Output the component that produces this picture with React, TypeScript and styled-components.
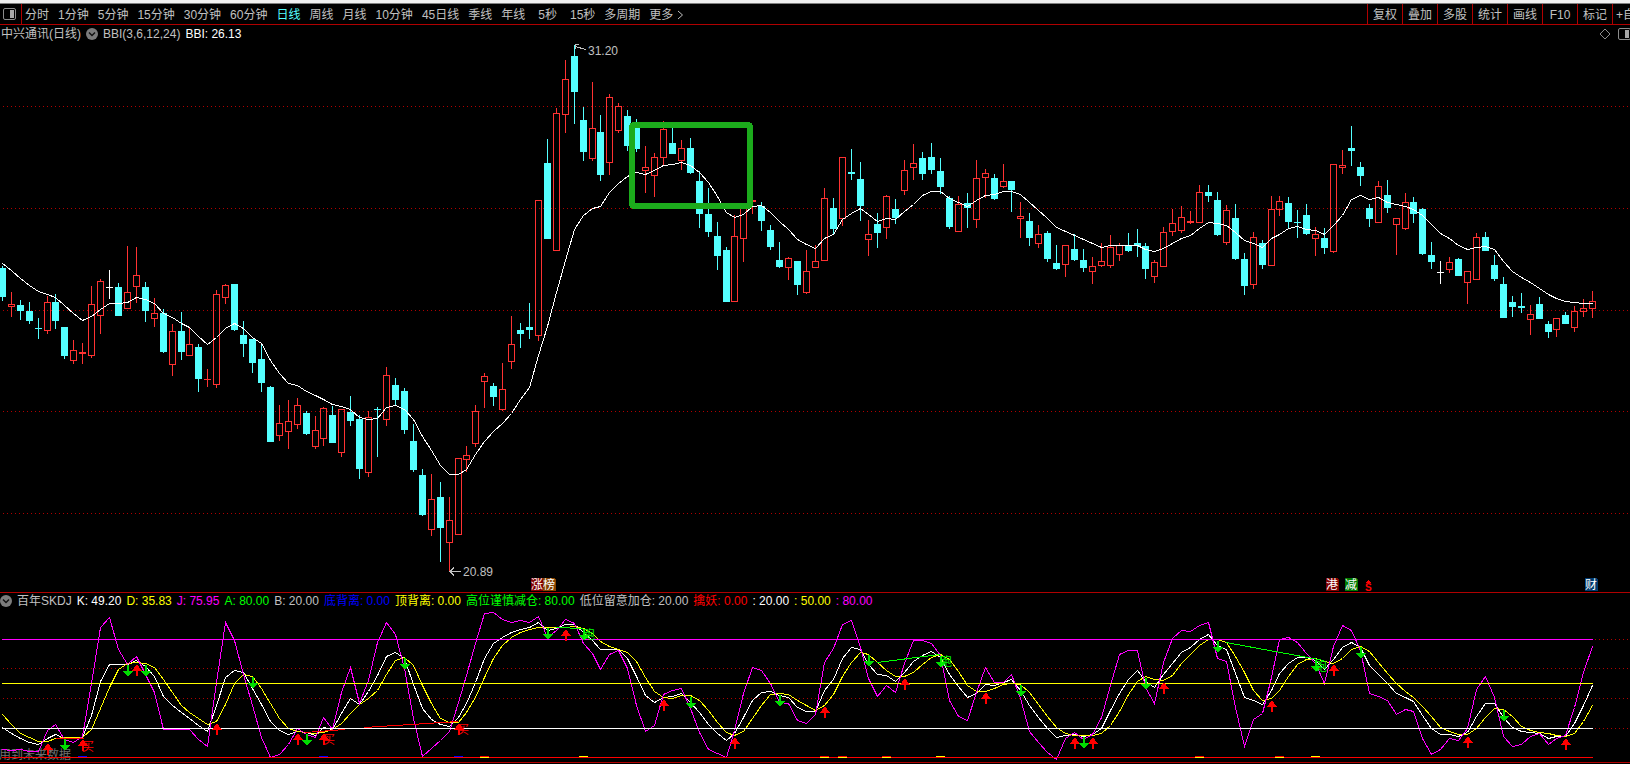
import React from "react";
import styled, { createGlobalStyle } from "styled-components";

const FONT = '"Liberation Sans", "Noto Sans CJK SC", sans-serif';
const LINE = "#b00000";
const CYAN = "#54ffff";
const RED = "#ff3232";
const SILVER = "#c0c0c0";
const MAGENTA = "#ff00ff";

const GlobalStyle = createGlobalStyle`
  * { box-sizing: border-box; }
  body { margin: 0; background: #000; overflow-x: hidden; }
`;

const Page = styled.main`
  display: flex;
  flex-direction: column;
  background: #000;
  color: ${SILVER};
  font: 12px/16px ${FONT};
`;

const TopEdge = styled.div`
  height: 4px;
  background: #f0f0f0;
  border-bottom: 1px solid #808080;
`;

const Toolbar = styled.header`
  display: flex;
  justify-content: space-between;
  height: 21px;
  border-bottom: 1px solid ${LINE};
`;

const Group = styled.nav`
  display: flex;
  align-items: stretch;
  flex: none;
`;

const PlainButton = styled.button`
  padding: 0;
  border: 0;
  background: none;
  color: inherit;
  font: inherit;
  white-space: nowrap;
  cursor: pointer;
`;

const IconButton = styled(PlainButton)`
  display: flex;
  align-items: center;
  flex: none;
`;

const LayoutButton = styled(IconButton)`
  width: 22px;
  padding-left: 3px;
  border-right: 1px solid ${LINE};
`;

const Periods = styled.div`
  display: flex;
  gap: 9px;
  padding: 2px 0 0 3px;
`;

const Period = styled(PlainButton)<{ $active?: boolean; $spaced?: boolean }>`
  padding-left: ${(p) => (p.$spaced ? 4 : 0)}px;
  color: ${(p) => (p.$active ? CYAN : SILVER)};
`;

const MoreButton = styled(PlainButton)`
  display: flex;
  align-items: center;
  gap: 4px;
`;

const Tool = styled(PlainButton)<{ $clipped?: boolean }>`
  width: ${(p) => (p.$clipped ? 18 : 35)}px;
  padding: 2px 0 0 ${(p) => (p.$clipped ? 3 : 0)}px;
  border-left: 1px solid ${LINE};
  text-align: ${(p) => (p.$clipped ? "left" : "center")};
  overflow: hidden;
`;

const Panel = styled.section`
  border-bottom: 1px solid ${LINE};
`;

const TitleRow = styled.div`
  display: flex;
  align-items: center;
  justify-content: space-between;
  height: 18px;
  padding-left: 1px;
  overflow: hidden;
`;

const LegendRow = styled.div`
  display: flex;
  align-items: center;
  gap: 5px;
  height: 17px;
  padding-bottom: 2px;
  white-space: nowrap;
`;

const Fields = styled.div`
  display: flex;
  align-items: center;
  gap: 5px;
  white-space: nowrap;
`;

const Corner = styled.div`
  display: flex;
  gap: 7px;
  width: 31px;
  overflow: hidden;
`;

const Field = styled.span<{ $color?: string }>`
  color: ${(p) => p.$color ?? SILVER};
`;

const Plot = styled.svg`
  display: block;
  width: 100%;
  height: auto;
  font: 12px ${FONT};
  shape-rendering: crispEdges;
`;

/* ---------- data ---------- */

type Kind = "R" | "C" | "W";
type Candle = [Kind, number, number, number, number];

// kind, wick top, body top, body bottom, wick bottom
const candles: Candle[] = [
  ["C",266,268,297,301],["R",292,304,307,317],["C",300,305,311,320],["C",302,311,321,324],["C",318,328,329,339],
  ["R",296,302,331,334],["C",294,302,321,329],["C",327,327,356,359],["R",340,350,361,364],["R",343,352,354,364],
  ["R",286,304,356,358],["R",279,281,316,334],["W",270,287,288,299],["C",283,287,316,316],["R",246,292,309,309],
  ["R",247,275,287,303],["C",282,287,311,322],["R",298,313,319,327],["C",309,313,352,353],["R",324,331,365,376],
  ["C",312,331,352,360],["R",328,344,356,356],["C",344,347,379,392],["R",369,379,380,387],["R",290,294,385,388],
  ["R",284,285,298,304],["C",284,284,330,331],["C",321,335,344,357],["C",339,339,363,373],["C",343,359,383,392],
  ["C",386,387,442,442],["R",405,423,436,441],["R",400,421,432,449],["R",398,405,425,429],["C",411,413,434,435],
  ["R",416,430,447,449],["R",407,408,439,446],["C",406,415,443,443],["R",409,409,453,457],["C",396,412,421,426],
  ["C",415,419,469,479],["R",411,417,473,477],["C",407,409,410,457],["R",367,375,420,426],["C",378,385,400,406],
  ["C",388,391,430,434],["C",424,441,470,472],["C",469,475,515,516],["R",474,499,530,536],["C",482,497,528,562],
  ["R",497,520,543,571],["R",458,458,535,535],["R",446,455,460,472],["R",405,411,444,447],["R",373,376,382,408],
  ["C",383,386,397,406],["R",363,389,410,411],["R",316,344,362,369],["C",323,330,334,348],["C",303,327,330,339],
  ["R",200,200,336,341],["C",139,163,239,239],["R",108,113,251,251],["R",60,79,115,133],["C",45,56,92,124],
  ["C",107,120,152,161],["R",82,128,159,161],["C",115,132,175,181],["R",94,97,163,175],["R",103,106,131,133],
  ["C",110,116,146,151],["C",119,125,149,152],["R",146,167,171,193],["R",153,157,176,197],["R",121,129,158,165],
  ["C",126,143,154,154],["R",140,148,161,170],["C",138,148,173,174],["C",171,181,214,228],["C",188,214,232,237],
  ["C",222,236,256,270],["C",247,250,302,302],["R",215,236,302,302],["R",206,206,239,262],["R",200,200,202,214],
  ["C",202,206,221,231],["C",225,230,247,250],["C",242,260,267,268],["R",257,258,268,280],["C",261,261,285,295],
  ["R",250,271,293,294],["R",245,261,268,268],["R",188,198,261,261],["C",198,208,229,234],["R",157,157,219,226],
  ["C",149,172,174,180],["C",162,179,206,221],["R",220,234,240,256],["C",213,224,233,248],["R",195,196,228,239],
  ["C",199,209,218,224],["R",160,170,191,195],["R",144,163,168,180],["C",152,158,174,180],["C",143,157,170,174],
  ["C",158,171,187,194],["C",196,198,227,229],["R",196,204,232,232],["C",193,203,208,228],["R",160,178,220,228],
  ["R",169,173,178,198],["C",174,178,199,200],["R",164,181,187,188],["C",181,181,190,212],["R",202,216,219,238],
  ["C",213,221,238,246],["R",225,234,244,248],["C",231,233,259,262],["C",245,263,269,270],["R",245,245,265,277],
  ["C",234,249,260,261],["C",249,260,268,272],["R",257,266,272,284],["R",243,261,266,267],["R",235,247,266,268],
  ["R",243,245,255,261],["C",233,245,251,252],["C",229,243,246,257],["C",243,246,269,279],["R",260,262,277,283],
  ["R",227,232,267,267],["R",209,223,232,236],["R",206,217,231,233],["R",211,221,223,224],["R",185,192,223,223],
  ["C",185,192,196,202],["C",192,200,235,236],["R",205,210,243,245],["C",204,218,259,260],["C",253,259,286,295],
  ["R",232,237,285,289],["C",240,243,265,269],["R",196,209,266,266],["R",196,201,210,216],["C",197,203,222,229],
  ["C",210,222,223,238],["C",204,215,234,235],["R",227,234,239,256],["C",228,238,248,254],["R",164,164,252,253],
  ["R",150,165,168,174],["C",126,148,151,166],["C",162,167,176,186],["C",204,208,219,227],["R",181,186,223,223],
  ["C",180,195,208,213],["R",218,218,225,255],["R",193,202,229,230],["C",197,202,214,223],["C",208,209,254,255],
  ["C",242,255,262,269],["W",261,272,273,284],["R",257,262,270,273],["C",258,259,276,276],["R",271,271,283,304],
  ["R",233,237,280,280],["C",232,237,251,251],["C",255,265,279,281],["C",277,284,318,318],["C",296,302,307,317],
  ["C",293,306,308,313],["R",305,314,320,335],["C",297,304,319,319],["C",321,324,332,338],["R",318,318,330,337],
  ["C",312,315,324,324],["R",306,311,328,332],["R",299,308,312,317],["R",291,301,309,318],
];

const bbi = [
  263,270,278,285,291,294,297,305,313,320,316,309,303,303,302,297,299,303,313,317,323,327,336,344,337,328,323,328,337,343,
  360,373,383,385,391,395,399,404,406,409,417,419,418,407,405,409,419,436,450,465,474,474,469,454,441,431,423,413,399,387,
  355,326,292,260,229,215,208,206,192,183,176,172,174,170,165,164,162,165,172,182,196,212,217,214,206,205,212,221,229,239,
  244,248,238,234,219,213,208,214,221,218,219,211,204,195,191,191,198,202,206,200,195,194,191,191,194,202,210,218,227,231,
  235,239,243,247,245,245,245,245,249,251,248,243,238,235,228,222,223,225,232,240,243,247,238,234,228,226,229,230,234,225,
  215,199,195,199,197,202,204,206,209,215,224,233,238,245,249,247,246,249,261,271,277,282,288,294,298,301,302,303,303,
];

const kLine = [
  727,733,738,742,744,738,734,738,738,737,715,681,664,664,664,660,666,676,696,705,712,718,725,731,705,677,670,672,688,704,
  721,730,734,731,732,735,727,729,713,698,704,691,675,656,652,658,684,708,719,724,726,717,703,682,658,643,637,632,629,627,
  622,630,628,624,624,632,640,649,649,649,658,676,695,702,697,696,693,702,712,724,733,740,733,717,700,692,691,695,697,707,
  711,711,690,679,658,647,649,664,674,675,681,672,661,655,651,657,674,686,697,693,684,685,682,679,690,705,717,728,737,735,
  734,736,734,728,710,693,679,670,681,687,674,663,652,647,639,634,645,649,673,697,700,704,690,673,663,657,657,660,669,659,
  647,642,647,665,674,683,693,697,701,715,728,734,734,736,732,716,703,703,717,727,731,732,733,738,736,736,723,705,685,
];

const dLine = [
  714,724,733,737,741,741,738,737,737,737,729,708,687,669,663,662,663,667,679,692,705,712,718,724,721,704,683,674,676,688,
  703,718,728,731,732,733,732,729,723,713,704,698,690,674,660,657,665,685,703,718,722,722,712,697,677,658,645,637,632,629,
  627,627,627,627,626,628,633,641,646,649,652,661,677,691,697,698,695,695,700,710,722,732,735,731,718,705,694,693,694,700,
  705,710,705,694,676,662,652,654,662,670,676,676,672,664,657,654,659,671,685,691,691,688,684,683,684,692,704,716,727,733,
  735,735,735,733,725,711,694,681,676,679,680,675,663,654,645,639,639,642,656,672,690,700,698,690,676,664,659,658,661,663,
  658,649,646,651,662,673,683,691,697,706,716,727,731,734,734,728,717,708,709,716,726,730,732,733,735,736,733,721,705,
];

const jLine = [
  749,750,749,751,751,730,724,739,742,736,683,627,617,649,664,656,674,692,729,729,729,729,739,746,682,622,640,674,705,737,
  757,754,744,728,734,737,717,729,692,667,703,680,642,622,634,668,718,756,748,740,731,702,675,643,613,612,619,622,620,622,
  616,637,630,619,623,643,653,669,654,650,668,705,731,725,694,690,688,708,732,749,753,757,730,693,667,670,683,702,703,720,
  723,714,662,648,624,620,647,678,696,685,692,663,640,640,643,655,700,716,720,692,667,682,682,674,698,731,742,752,759,738,
  732,739,734,717,685,654,650,650,687,703,662,638,630,631,625,622,658,661,707,746,719,713,677,639,637,642,653,663,683,646,
  625,630,650,693,696,700,714,709,711,738,754,749,738,740,728,689,676,697,736,746,744,736,733,744,738,735,707,672,646,
];

// bar index, top of the arrow
const upArrows: [number, number][] = [
  [5,743],[9,739],[15,664],[24,723],[33,733],[36,733],[51,723],[63,629],[74,699],[82,737],[92,706],
  [101,678],[110,692],[120,737],[122,737],[130,682],[142,700],[149,664],[164,736],[175,738],
];
const downArrows: [number, number][] = [
  [7,739],[14,665],[16,665],[28,677],[34,734],[45,658],[61,628],[65,629],[77,697],[87,695],[97,655],
  [105,656],[114,685],[121,737],[128,678],[136,641],[147,660],[152,647],[168,710],
];

const badges = [
  { x: 531, text: "涨", fill: "#800000" },
  { x: 543, text: "榜", fill: "#844200" },
  { x: 1326, text: "港", fill: "#800000" },
  { x: 1345, text: "减", fill: "#007a00" },
  { x: 1585, text: "财", fill: "#003a70" },
];

const legend: [string, string?][] = [
  ["百年SKDJ"],
  ["K: 49.20", "#fff"],
  ["D: 35.83", "#ffff00"],
  ["J: 75.95", MAGENTA],
  ["A: 80.00", "#00ff00"],
  ["B: 20.00"],
  ["底背离: 0.00", "#0000ff"],
  ["顶背离: 0.00", "#ffff00"],
  ["高位谨慎减仓: 80.00", "#00ff00"],
  ["低位留意加仓: 20.00"],
  ["擒妖: 0.00", "#ff0000"],
  [": 20.00", "#fff"],
  [": 50.00", "#ffff00"],
  [": 80.00", MAGENTA],
];

const periods = [
  "分时", "1分钟", "5分钟", "15分钟", "30分钟", "60分钟", "日线", "周线", "月线",
  "10分钟", "45日线", "季线", "年线", "5秒", "15秒", "多周期",
];
const tools = ["复权", "叠加", "多股", "统计", "画线", "F10", "标记"];

/* ---------- drawing helpers ---------- */

// Bars are just under nine pixels apart, so one pixel is dropped now and then.
const barX = (i: number) => 2 + 9 * i - (Math.floor((i - 5.45) / 15.25) + 1);
const points = (ys: number[]) => ys.map((y, i) => `${barX(i) + 0.5},${y + 0.5}`).join(" ");

const Curve = ({ ys, color }: { ys: number[]; color: string }) => (
  <polyline points={points(ys)} fill="none" stroke={color} />
);

const Dots = ({ y, from = 3 }: { y: number; from?: number }) => (
  <line x1={from} x2={1628} y1={y + 0.5} y2={y + 0.5} stroke={LINE} strokeDasharray="1 3" />
);

const Level = ({ y, color }: { y: number; color: string }) => (
  <rect x={2} y={y} width={1591} height={1} fill={color} />
);

const CandleMark = ({ x, data }: { x: number; data: Candle }) => {
  const [kind, high, top, bottom, low] = data;
  const color = kind === "C" ? CYAN : kind === "R" ? RED : "#fff";
  const height = bottom - top;
  const hollow = kind === "R" && height > 2;
  return (
    <g fill={color}>
      {top > high && <rect x={x} y={high} width={1} height={top - high} />}
      {low > bottom && <rect x={x} y={bottom} width={1} height={low - bottom} />}
      {hollow ? (
        <rect x={x - 2.5} y={top + 0.5} width={6} height={height - 1} fill="none" stroke={color} />
      ) : (
        <rect x={x - 3} y={top} width={7} height={height} />
      )}
    </g>
  );
};

const UpArrow = ({ x, y }: { x: number; y: number }) => (
  <path d={`M${x + 1} ${y}l5 7h-4v5h-2v-5h-4z`} fill="#ff0000" />
);
const DownArrow = ({ x, y }: { x: number; y: number }) => (
  <path d={`M${x + 1} ${y + 12}l5 -6h-4v-6h-2v6h-4z`} fill="#00dc00" />
);

const PanelIcon = () => (
  <svg width="13" height="12" viewBox="0 0 13 12" aria-hidden="true">
    <rect x="0.5" y="0.5" width="12" height="11" rx="1.5" fill="none" stroke="#8c8c8c" />
    <rect x="7" y="2" width="4" height="8" fill="#a8a8a8" />
  </svg>
);

const ToggleIcon = () => (
  <svg width="12" height="12" viewBox="0 0 12 12" aria-hidden="true">
    <circle cx="6" cy="6" r="6" fill="#7c7c7c" />
    <path d="M3 4.5L6 7.5L9 4.5" fill="none" stroke="#111" strokeWidth="1.4" />
  </svg>
);

const PriceChart = () => (
  <Plot viewBox="0 43 1630 549" role="img" aria-label="日线 BBI">
    {[106, 208, 310, 411, 513].map((y) => <Dots key={y} y={y} />)}
    {candles.map((c, i) => <CandleMark key={i} x={barX(i)} data={c} />)}
    <Curve ys={bbi} color="#fff" />
    <rect x={632} y={125} width={118} height={81} rx={2} fill="none" stroke="#1cab1c" strokeWidth={6} />
    <path d="M586 49.5L575 46.5M579 44.5H575.5V49" fill="none" stroke={SILVER} />
    <text x={588} y={55} fill={SILVER}>31.20</text>
    <path d="M461 571.5H450M454 567.5L450 571.5L454 575.5" fill="none" stroke={SILVER} />
    <text x={463} y={576} fill={SILVER}>20.89</text>
    {badges.map((b) => (
      <g key={b.text}>
        <path d={`M${b.x} 578h11l2 2v11h-13z`} fill={b.fill} />
        <text x={b.x} y={589} fill="#fff">{b.text}</text>
      </g>
    ))}
    <path d="M1368 580l3 3h-6z" fill="#ff0000" />
    <text x={1365} y={591} fill="#ff0000" fontSize={10} fontWeight="bold">S</text>
  </Plot>
);

const IndicatorChart = () => (
  <Plot viewBox="0 610 1630 152" role="img" aria-label="百年SKDJ">
    <text x={-1} y={759} fill="#707070">用到未来数据</text>
    <Dots y={668} />
    <Dots y={698} />
    <Dots y={639} from={1595} />
    <Dots y={728} from={1595} />
    <Curve ys={kLine} color="#fff" />
    <Curve ys={dLine} color="#ffff00" />
    <Curve ys={jLine} color={MAGENTA} />
    <Level y={757} color="#ff0000" />
    <Level y={728} color="#fff" />
    <Level y={683} color="#ffff00" />
    <Level y={639} color={MAGENTA} />
    <path d="M56 738.5H84M305 732.5L345 729.5M364 727.5L458 721.5" fill="none" stroke="#ff0000" />
    <path d="M556 627.5L583 628.5M877 662.5L940 654.5M1226 642.5L1324 660.5" fill="none" stroke="#00ff00" />
    {[78, 319, 454].map((x) => <rect key={x} x={x} y={756} width={9} height={1} fill="#0000ff" />)}
    {[480, 820, 838, 882, 1195, 1275].map((x) => (
      <g key={x}>
        <rect x={x} y={756} width={9} height={1} fill="#ff0000" />
        <rect x={x} y={757} width={9} height={1} fill="#ffff00" />
      </g>
    ))}
    {[579, 936, 1311].map((x) => <rect key={x} x={x} y={756} width={9} height={1} fill="#ffff00" />)}
    {upArrows.map(([i, y]) => <UpArrow key={i} x={barX(i)} y={y} />)}
    {downArrows.map(([i, y]) => <DownArrow key={i} x={barX(i)} y={y} />)}
    <g fill="#ff0000">
      <text x={82} y={751}>买</text>
      <text x={323} y={744}>买</text>
      <text x={457} y={734}>买</text>
    </g>
    <g fill="#00ff00">
      <text x={583} y={639}>跑</text>
      <text x={940} y={666}>跑</text>
      <text x={1315} y={671}>跑</text>
    </g>
  </Plot>
);

export default function App() {
  return (
    <>
      <GlobalStyle />
      <Page>
        <TopEdge />
        <Toolbar>
          <Group>
            <LayoutButton aria-label="布局"><PanelIcon /></LayoutButton>
            <Periods>
              {periods.map((p) => (
                <Period key={p} $active={p === "日线"} $spaced={p.endsWith("秒")}>{p}</Period>
              ))}
              <MoreButton>
                更多
                <svg width="7" height="10" viewBox="0 0 7 10" aria-hidden="true">
                  <path d="M1 1L5.500 5L1 9" fill="none" stroke={SILVER} />
                </svg>
              </MoreButton>
            </Periods>
          </Group>
          <Group>
            {tools.map((t) => <Tool key={t}>{t}</Tool>)}
            <Tool $clipped>+自</Tool>
          </Group>
        </Toolbar>

        <Panel>
          <TitleRow>
            <Fields>
              <Field>中兴通讯(日线)</Field>
              <IconButton aria-label="指标"><ToggleIcon /></IconButton>
              <Field>BBI(3,6,12,24)</Field>
              <Field $color="#fff">BBI: 26.13</Field>
            </Fields>
            <Corner>
              <IconButton aria-label="标记点">
                <svg width="12" height="12" viewBox="0 0 12 12" aria-hidden="true">
                  <path d="M6 1L11 6L6 11L1 6Z" fill="none" stroke="#8c8c8c" />
                </svg>
              </IconButton>
              <IconButton aria-label="侧栏"><PanelIcon /></IconButton>
            </Corner>
          </TitleRow>
          <PriceChart />
        </Panel>

        <Panel>
          <LegendRow>
            <IconButton aria-label="副图指标"><ToggleIcon /></IconButton>
            {legend.map(([text, color]) => <Field key={text} $color={color}>{text}</Field>)}
          </LegendRow>
          <IndicatorChart />
        </Panel>
      </Page>
    </>
  );
}
